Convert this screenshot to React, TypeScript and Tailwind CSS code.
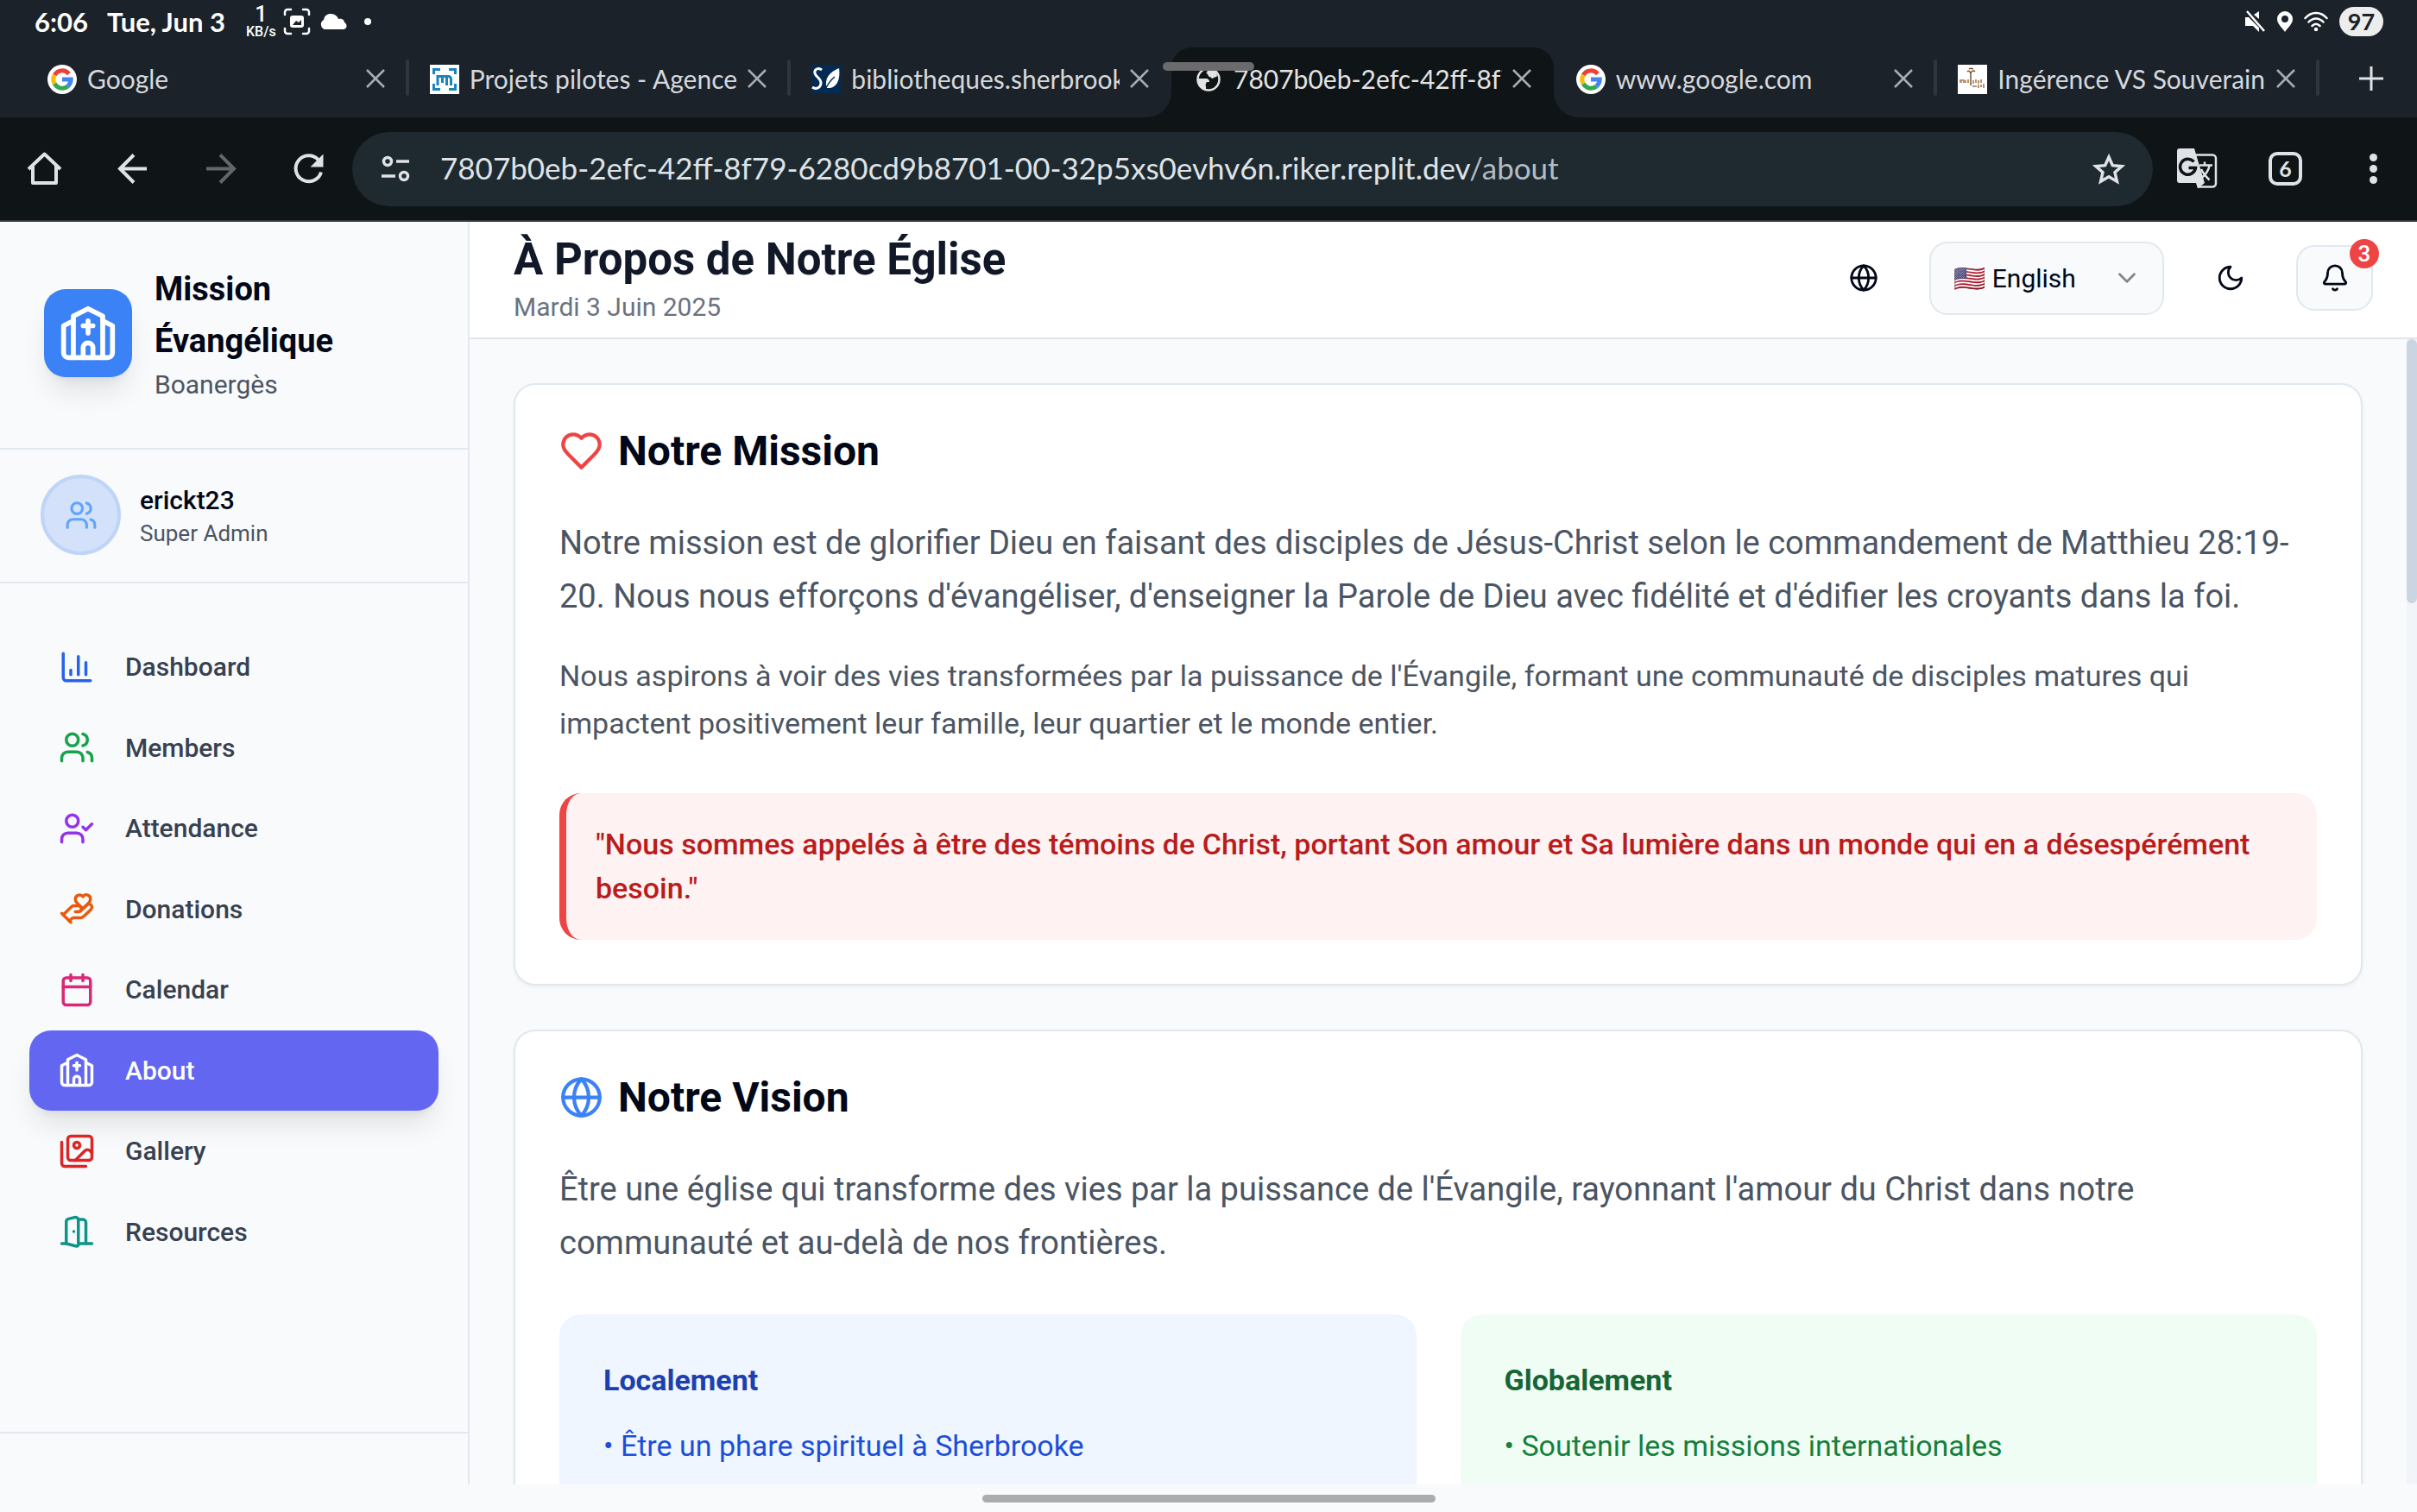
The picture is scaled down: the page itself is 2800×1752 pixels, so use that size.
import React from "react";
import type { ReactNode } from "react";

type IconProps = { className?: string; children?: ReactNode };

function Stroke({ className = "", children }: IconProps) {
  return (
    <svg
      viewBox="0 0 24 24"
      fill="none"
      stroke="currentColor"
      strokeWidth="2"
      strokeLinecap="round"
      strokeLinejoin="round"
      aria-hidden="true"
      className={`shrink-0 ${className}`}
    >
      {children}
    </svg>
  );
}

const Church = ({ className }: IconProps) => (
  <Stroke className={className}>
    <path d="m18 7 4 2v11a2 2 0 0 1-2 2H4a2 2 0 0 1-2-2V9l4-2" />
    <path d="M14 22v-4a2 2 0 0 0-2-2a2 2 0 0 0-2 2v4" />
    <path d="M18 22V5l-6-3-6 3v17" />
    <path d="M12 7v5" />
    <path d="M10 9h4" />
  </Stroke>
);

const Users = ({ className }: IconProps) => (
  <Stroke className={className}>
    <path d="M16 21v-2a4 4 0 0 0-4-4H6a4 4 0 0 0-4 4v2" />
    <circle cx="9" cy="7" r="4" />
    <path d="M22 21v-2a4 4 0 0 0-3-3.87" />
    <path d="M16 3.13a4 4 0 0 1 0 7.75" />
  </Stroke>
);

const Chart = ({ className }: IconProps) => (
  <Stroke className={className}>
    <path d="M3 3v16a2 2 0 0 0 2 2h16" />
    <path d="M18 17V9" />
    <path d="M13 17V5" />
    <path d="M8 17v-3" />
  </Stroke>
);

const UserCheck = ({ className }: IconProps) => (
  <Stroke className={className}>
    <path d="M16 21v-2a4 4 0 0 0-4-4H6a4 4 0 0 0-4 4v2" />
    <circle cx="9" cy="7" r="4" />
    <path d="m16 11 2 2 4-4" />
  </Stroke>
);

const HandHeart = ({ className }: IconProps) => (
  <Stroke className={className}>
    <path d="M11 14h2a2 2 0 1 0 0-4h-3c-.6 0-1.1.2-1.4.6L3 16" />
    <path d="m7 20 1.6-1.4c.3-.4.8-.6 1.4-.6h4c1.1 0 2.1-.4 2.8-1.2l4.6-4.4a2 2 0 0 0-2.75-2.91l-4.2 3.9" />
    <path d="m2 15 6 6" />
    <path d="M19.5 8.5c.7-.7 1.5-1.6 1.5-2.7A2.73 2.73 0 0 0 16 4a2.78 2.78 0 0 0-5 1.8c0 1.2.8 2 1.5 2.8L16 12Z" />
  </Stroke>
);

const Calendar = ({ className }: IconProps) => (
  <Stroke className={className}>
    <path d="M8 2v4" />
    <path d="M16 2v4" />
    <rect width="18" height="18" x="3" y="4" rx="2" />
    <path d="M3 10h18" />
  </Stroke>
);

const Images = ({ className }: IconProps) => (
  <Stroke className={className}>
    <path d="M18 22H4a2 2 0 0 1-2-2V6" />
    <path d="m22 13-1.296-1.296a2.41 2.41 0 0 0-3.408 0L11 18" />
    <circle cx="12" cy="8" r="2" />
    <rect width="16" height="16" x="6" y="2" rx="2" />
  </Stroke>
);

const DoorOpen = ({ className }: IconProps) => (
  <Stroke className={className}>
    <path d="M13 4h3a2 2 0 0 1 2 2v14" />
    <path d="M2 20h3" />
    <path d="M13 20h9" />
    <path d="M10 12v.01" />
    <path d="M13 4.562v16.157a1 1 0 0 1-1.242.97L5 20V5.562a2 2 0 0 1 1.515-1.94l4-1A2 2 0 0 1 13 4.561Z" />
  </Stroke>
);

const Globe = ({ className }: IconProps) => (
  <Stroke className={className}>
    <circle cx="12" cy="12" r="10" />
    <path d="M12 2a14.5 14.5 0 0 0 0 20 14.5 14.5 0 0 0 0-20" />
    <path d="M2 12h20" />
  </Stroke>
);

const Heart = ({ className }: IconProps) => (
  <Stroke className={className}>
    <path d="M19 14c1.49-1.46 3-3.21 3-5.5A5.5 5.5 0 0 0 16.5 3c-1.76 0-3 .5-4.5 2-1.5-1.5-2.74-2-4.5-2A5.5 5.5 0 0 0 2 8.5c0 2.3 1.5 4.05 3 5.5l7 7Z" />
  </Stroke>
);

const Moon = ({ className }: IconProps) => (
  <Stroke className={className}>
    <path d="M12 3a6 6 0 0 0 9 9 9 9 0 1 1-9-9Z" />
  </Stroke>
);

const Bell = ({ className }: IconProps) => (
  <Stroke className={className}>
    <path d="M10.268 21a2 2 0 0 0 3.464 0" />
    <path d="M3.262 15.326A1 1 0 0 0 4 17h16a1 1 0 0 0 .74-1.673C19.41 13.956 18 12.499 18 8A6 6 0 0 0 6 8c0 4.499-1.411 5.956-2.738 7.326" />
  </Stroke>
);

const ChevronDown = ({ className }: IconProps) => (
  <Stroke className={className}>
    <path d="m6 9 6 6 6-6" />
  </Stroke>
);

function GoogleIcon() {
  return (
    <svg viewBox="0 0 34 34" className="size-[34px]" aria-hidden="true">
      <circle cx="17" cy="17" r="17" fill="#fff" />
      <g fill="none" strokeWidth="5">
        <path d="M24.9 10.6A10.2 10.2 0 0 0 8.2 11.9" stroke="#ea4335" />
        <path d="M8.2 11.9a10.2 10.2 0 0 0 0 10.2" stroke="#fbbc05" />
        <path d="M8.2 22.1a10.2 10.2 0 0 0 15.3 2.9" stroke="#34a853" />
        <path d="M23.5 25A10.2 10.2 0 0 0 27.2 17.1H17" stroke="#4285f4" />
      </g>
    </svg>
  );
}

function AgencyIcon() {
  return (
    <svg viewBox="0 0 34 34" className="size-[34px]" aria-hidden="true">
      <path d="M0 0h34v34H0z" fill="#fff" />
      <g fill="none" stroke="#1c84bd" strokeWidth="3">
        <path d="M4.500 11V5.500H12M22 5.500h7.500V11M4.500 22v6.500H12M22 28.500h7.500V22" />
        <path d="M9 24V12M9 13.500h12.500a3 3 0 0 1 3 3V24M14.500 14v7M19.500 14v10" />
      </g>
    </svg>
  );
}

function LibraryIcon() {
  return (
    <svg viewBox="0 0 34 34" className="size-[34px]" aria-hidden="true">
      <path d="M0 0h34v34H0z" fill="#032a52" />
      <path
        d="M12 6C8 3 3 5 4 10c1 4 7 6 7 11 0 6-6 8-10 5"
        fill="none"
        stroke="#fff"
        strokeWidth="3"
      />
      <path d="M32 4c-9 4-16 9-15 20l1 3c10 1 16-8 14-23Z" fill="#fff" />
      <path d="M16 29c3-7 6-11 11-15" fill="none" stroke="#032a52" strokeWidth="1.500" />
    </svg>
  );
}

function EarthIcon() {
  return (
    <svg viewBox="0 0 28 28" className="m-[3px] size-7" aria-hidden="true">
      <circle cx="14" cy="14" r="12.500" fill="none" stroke="#e3e3e3" strokeWidth="2.500" />
      <path
        d="M13 2c-1 3 0 4-2 5 3 0 2 3 4 4 2 0 2 2 4 2 1-2 4-1 5-3 0-4-4-8-11-8ZM2 13h9c3 0 4 2 4 4h-3c-1 2-2 3-1 5v4C5 25 1 20 2 13Z"
        fill="#e3e3e3"
      />
    </svg>
  );
}

function TreeIcon() {
  return (
    <svg viewBox="0 0 34 34" className="size-[34px]" aria-hidden="true">
      <path d="M0 0h34v34H0z" fill="#fff" />
      <g fill="none" stroke="#7a5230" strokeWidth="1.500">
        <path d="M15 10v14M11 8c2-2 3 0 4 2 1-3 3-4 5-2M13 5c1-1 3-1 5 0" />
        <path
          d="M2 18h4M2 20h3M7 17v4M9 18v3M12 17v4M18 18v4M21 17v4M24 18v4M27 17v4M17 25h5M24 23v4M27 23v3M30 22v5"
          stroke="#a0714a"
        />
      </g>
    </svg>
  );
}

type Tab = { label: string; icon: ReactNode; active?: boolean; divider?: boolean };

const tabs: Tab[] = [
  { label: "Google", icon: <GoogleIcon />, divider: true },
  { label: "Projets pilotes - Agence", icon: <AgencyIcon />, divider: true },
  { label: "bibliotheques.sherbrooke", icon: <LibraryIcon /> },
  { label: "7807b0eb-2efc-42ff-8f79", icon: <EarthIcon />, active: true },
  { label: "www.google.com", icon: <GoogleIcon />, divider: true },
  { label: "Ingérence VS Souveraine", icon: <TreeIcon />, divider: true },
];

function StatusBar() {
  return (
    <div className="flex h-[55px] items-start justify-between pr-[39px] pl-10 text-white">
      <div className="flex h-[50px] items-center text-[31px] font-bold">
        <span>6:06</span>
        <span className="ml-[22px]">Tue, Jun 3</span>
        <span className="ml-6 flex flex-col items-center font-[Roboto] leading-none font-medium">
          <span className="text-[25px] leading-6">1</span>
          <span className="text-[16px] leading-4">KB/s</span>
        </span>
        <svg viewBox="0 0 32 32" className="ml-2 size-8" aria-hidden="true">
          <path
            d="M2 8V5a3 3 0 0 1 3-3h4M23 2h4a3 3 0 0 1 3 3v3M30 24v3a3 3 0 0 1-3 3h-4M9 30H5a3 3 0 0 1-3-3v-3"
            fill="none"
            stroke="#fff"
            strokeWidth="2.500"
            strokeLinecap="round"
          />
          <rect x="8" y="9" width="16" height="14" rx="3" fill="#fff" />
          <path d="m11 20 4-5 3 2 3-3v6Z" fill="#1b2229" />
        </svg>
        <svg viewBox="0 0 32 20" className="ml-[10px] h-5 w-8" aria-hidden="true">
          <path
            d="M6 19a6 6 0 0 1-1-11C6 3 9 1 13 1c5 0 8 3 9 6 5-1 7 2 7 4 4 2 3 8-1 8Z"
            fill="#fff"
          />
        </svg>
        <span className="ml-5 size-2 rounded-full bg-white" />
      </div>
      <div className="flex h-[50px] items-center">
        <svg viewBox="0 0 24 26" className="h-[26px] w-6" aria-hidden="true">
          <path d="M17 1v9l-6-5ZM1 8h4l12 12v5l-7-7H1Z" fill="#fff" />
          <path d="m3 1 20 23" stroke="#fff" strokeWidth="2.500" />
        </svg>
        <svg viewBox="0 0 20 26" className="ml-[13px] h-[26px] w-5" aria-hidden="true">
          <path
            d="M10 1a9 9 0 0 0-9 9c0 6 6 10 9 15 3-5 9-9 9-15a9 9 0 0 0-9-9Zm0 5a4 4 0 1 1 0 8 4 4 0 0 1 0-8Z"
            fill="#fff"
          />
        </svg>
        <svg
          viewBox="0 0 28 24"
          className="ml-3 h-6 w-7"
          fill="none"
          stroke="#fff"
          strokeWidth="2.500"
          strokeLinecap="round"
          aria-hidden="true"
        >
          <path d="M1.500 8c7-8 18-8 25 0M5.500 12.500c5-5.500 12-5.500 17 0M9.500 17c3-3 6-3 9 0" />
          <circle cx="14" cy="21" r="1" fill="#fff" />
        </svg>
        <span className="ml-[13px] flex h-[34px] w-[51px] items-center justify-center rounded-full bg-[#ededed] text-[27px] font-bold text-[#1b2229]">
          97
        </span>
      </div>
    </div>
  );
}

function TabStrip() {
  return (
    <div className="relative flex h-[81px] pr-[31px] pl-[29px]">
      {tabs.map((tab) => (
        <div
          key={tab.label}
          className={`relative flex min-w-0 flex-1 pt-5 pr-[26px] pl-[26px] ${
            tab.active ? "rounded-t-3xl bg-[#0f1417] text-[#e3e3e3]" : "text-[#d5d8dc]"
          }`}
        >
          {tab.active && (
            <>
              <span className="absolute bottom-0 -left-7 size-7 bg-[radial-gradient(circle_at_0_0,#1b2229_27px,#0f1417_28px)]" />
              <span className="absolute -right-7 bottom-0 size-7 bg-[radial-gradient(circle_at_100%_0,#1b2229_27px,#0f1417_28px)]" />
            </>
          )}
          <button type="button" className="flex h-[34px] min-w-0 flex-1 items-center text-left text-[30px]">
            <span className="shrink-0">{tab.icon}</span>
            <span className="ml-3 min-w-0 flex-1 overflow-hidden pb-0.5 whitespace-nowrap">{tab.label}</span>
          </button>
          <button
            type="button"
            aria-label={`Close ${tab.label}`}
            className="ml-3 flex size-[22px] items-center justify-center pt-[10px] text-[#a9acb0]"
          >
            <svg viewBox="0 0 22 22" className="size-[22px] shrink-0" stroke="currentColor" strokeWidth="2.500" aria-hidden="true">
              <path d="m1 1 20 20M21 1 1 21" />
            </svg>
          </button>
          {tab.divider && <span className="absolute top-3.5 -right-0.5 h-[42px] w-1 rounded-full bg-[#30363b]" />}
        </div>
      ))}
      <button type="button" aria-label="New tab" className="ml-10 flex h-[72px] w-11 items-center justify-center">
        <svg viewBox="0 0 28 28" className="size-7" stroke="#dfe2e6" strokeWidth="3" aria-hidden="true">
          <path d="M14 0v28M0 14h28" />
        </svg>
      </button>
    </div>
  );
}

function Toolbar() {
  return (
    <div className="flex h-[121px] items-center border-b-2 border-[#33373a] bg-[#0f1417] pr-6 pl-[26px] text-[#dfe2e6]">
      <div className="flex items-center gap-[51px]">
        <button type="button" aria-label="Home">
          <svg viewBox="0 0 51 51" className="size-[51px]" fill="none" stroke="currentColor" strokeWidth="4" aria-hidden="true">
            <path d="M7 26 25.500 8.500 44 26M12 22v20h27V22" strokeLinejoin="round" />
          </svg>
        </button>
        <button type="button" aria-label="Back">
          <svg viewBox="0 0 51 51" className="size-[51px]" fill="none" stroke="currentColor" strokeWidth="4" aria-hidden="true">
            <path d="M42 25.500H11M27 9.500l-16 16 16 16" />
          </svg>
        </button>
        <button type="button" aria-label="Forward" className="text-[#63676a]">
          <svg viewBox="0 0 51 51" className="size-[51px]" fill="none" stroke="currentColor" strokeWidth="4" aria-hidden="true">
            <path d="M9 25.500h32M25 9.500l16 16-16 16" />
          </svg>
        </button>
        <button type="button" aria-label="Reload">
          <svg viewBox="0 0 51 51" className="size-[51px]" fill="none" stroke="currentColor" strokeWidth="4" aria-hidden="true">
            <path d="M40 29.500A15 15 0 1 1 37 15.500" />
            <path d="M42.500 8.500v15h-15Z" fill="currentColor" stroke="none" />
          </svg>
        </button>
      </div>
      <div className="ml-[25px] flex h-[86px] min-w-0 flex-1 items-center rounded-full bg-[#1e2a30] pr-8 pl-[33px]">
        <button type="button" aria-label="Site information">
          <svg viewBox="0 0 34 34" className="size-[34px]" fill="none" stroke="currentColor" strokeWidth="3.500" aria-hidden="true">
            <circle cx="8" cy="8" r="4.500" />
            <path d="M18 8h15M1 25h16" />
            <circle cx="27" cy="25" r="4.500" />
          </svg>
        </button>
        <button type="button" className="ml-[35px] min-w-0 flex-1 truncate pb-0.5 text-left text-[35px]">
          7807b0eb-2efc-42ff-8f79-6280cd9b8701-00-32p5xs0evhv6n.riker.replit.dev<span className="text-[#b4bcc2]">/about</span>
        </button>
        <button type="button" aria-label="Bookmark">
          <svg viewBox="0 0 38 38" className="size-[38px]" fill="none" stroke="currentColor" strokeWidth="3.500" aria-hidden="true">
            <path d="m19 5 4.300 9.700 10.700 1-8 7 2.400 10.500L19 27.700l-9.400 5.500 2.400-10.500-8-7 10.700-1Z" />
          </svg>
        </button>
      </div>
      <button type="button" aria-label="Translate" className="ml-7">
        <svg viewBox="0 0 47 47" className="size-[47px]" aria-hidden="true">
          <path d="M21 7.500h20a4 4 0 0 1 4 4v29a4 4 0 0 1-4 4H24" fill="none" stroke="currentColor" strokeWidth="2.500" />
          <path d="M3 0h17l12 40-8 6.500-2-6.500H3a3 3 0 0 1-3-3V3a3 3 0 0 1 3-3Z" fill="currentColor" />
          <path d="M19.500 15.500a9 9 0 1 0 2 7h-8" fill="none" stroke="#0f1417" strokeWidth="3.500" />
          <path d="M26 19.500h15M32 15.500v4M37.500 20c-1 6-4 10-9 14M28 24c2 5 6 9 9.500 12.500" fill="none" stroke="currentColor" strokeWidth="2.500" />
        </svg>
      </button>
      <button
        type="button"
        aria-label="6 open tabs"
        className="ml-[59px] flex size-[39px] items-center justify-center rounded-[10px] border-4 border-current text-[25px] leading-none font-bold"
      >
        6
      </button>
      <button type="button" aria-label="More options" className="ml-[77px] flex w-[10px] flex-col items-center gap-1">
        <span className="size-[9px] rounded-full bg-current" />
        <span className="size-[9px] rounded-full bg-current" />
        <span className="size-[9px] rounded-full bg-current" />
      </button>
      <span className="w-[22px]" />
    </div>
  );
}

const navItems = [
  { label: "Dashboard", Icon: Chart, color: "text-[#2563eb]" },
  { label: "Members", Icon: Users, color: "text-[#16a34a]" },
  { label: "Attendance", Icon: UserCheck, color: "text-[#9333ea]" },
  { label: "Donations", Icon: HandHeart, color: "text-[#ea580c]" },
  { label: "Calendar", Icon: Calendar, color: "text-[#db2777]" },
  { label: "About", Icon: Church, color: "text-white", active: true },
  { label: "Gallery", Icon: Images, color: "text-[#dc2626]" },
  { label: "Resources", Icon: DoorOpen, color: "text-[#0d9488]" },
];

function Sidebar() {
  return (
    <aside className="flex w-[544px] shrink-0 flex-col border-r-2 border-[#e2e8f0] bg-[#f9fafc]">
      <div className="flex items-center gap-[26px] border-b-2 border-[#e2e8f0] px-[51px] pt-12 pb-[52px]">
        <div className="flex size-[102px] shrink-0 items-center justify-center rounded-[25px] bg-[#3b82f6] text-white shadow-[0_21px_32px_-6px_rgba(0,0,0,0.1),0_8px_12px_-8px_rgba(0,0,0,0.1)]">
          <Church className="size-[68px]" />
        </div>
        <div className="min-w-0">
          <h1 className="text-[38px] leading-[60px] font-bold text-[#020817]">Mission Évangélique</h1>
          <p className="text-[30px] leading-[42px] text-[#4b5563]">Boanergès</p>
        </div>
      </div>
      <div className="flex items-center gap-[22px] border-b-2 border-[#e2e8f0] px-[47px] pt-[29px] pb-[31px]">
        <div className="flex size-[93px] shrink-0 items-center justify-center rounded-full border-4 border-[#bfd5f8] bg-[#d3e1fb] text-[#60a5fa]">
          <Users className="size-[38px]" />
        </div>
        <div>
          <p className="text-[30px] leading-[42px] font-medium text-[#020817]">erickt23</p>
          <p className="text-[26px] leading-[34px] text-[#4b5563]">Super Admin</p>
        </div>
      </div>
      <nav className="grid h-[850px] auto-rows-fr px-[34px] pt-[50px] pb-[52px]">
        {navItems.map(({ label, Icon, color, active }) => (
          <a
            key={label}
            href={`#${label.toLowerCase()}`}
            className={`flex items-center gap-[35px] rounded-[25px] px-[34px] text-[30px] font-medium ${
              active
                ? "bg-[#6366f1] text-white shadow-[0_21px_32px_-6px_rgba(0,0,0,0.1),0_8px_12px_-8px_rgba(0,0,0,0.1)]"
                : "text-[#374151]"
            }`}
          >
            <Icon className={`size-[42px] ${color}`} />
            {label}
          </a>
        ))}
      </nav>
      <div className="mt-auto h-[61px] shrink-0 border-t-2 border-[#e2e8f0]" />
    </aside>
  );
}

function PageHeader() {
  return (
    <header className="flex h-[136px] shrink-0 items-center border-b-2 border-[#e2e4e8] bg-white pr-[51px] pb-1 pl-[51px]">
      <div className="min-w-0 flex-1">
        <h2 className="text-[51px] leading-[68px] font-bold text-[#111827]">À Propos de Notre Église</h2>
        <p className="text-[30px] leading-[42px] text-[#6b7280]">Mardi 3 Juin 2025</p>
      </div>
      <button type="button" aria-label="Change region" className="flex h-[76px] w-[102px] items-center justify-center text-[#020817]">
        <Globe className="size-[34px]" />
      </button>
      <div className="relative ml-[25px]">
        <select
          aria-label="Language"
          className="h-[85px] w-[272px] appearance-none rounded-[21px] border-2 border-[#e2e8f0] bg-[#f8fafc] pr-16 pl-[26px] text-[30px] text-[#020817]"
        >
          <option>🇺🇸 English</option>
        </select>
        <ChevronDown className="pointer-events-none absolute inset-y-0 right-[26px] my-auto size-[34px] text-[#84868c]" />
      </div>
      <button type="button" aria-label="Dark mode" className="ml-[34px] flex h-[76px] w-[85px] items-center justify-center text-[#020817]">
        <Moon className="size-[34px]" />
      </button>
      <button
        type="button"
        aria-label="Notifications"
        className="relative ml-[34px] flex h-[76px] w-[89px] items-center justify-center rounded-[21px] border-2 border-[#e2e8f0] bg-[#f8fafc] text-[#020817]"
      >
        <Bell className="size-[34px]" />
        <span className="absolute -top-[9px] -right-[9px] flex size-[34px] items-center justify-center rounded-full bg-[#ef4444] text-[26px] leading-none font-medium text-white">
          3
        </span>
      </button>
    </header>
  );
}

function Card({ title, icon, children }: { title: string; icon: ReactNode; children: ReactNode }) {
  return (
    <section className="shrink-0 rounded-[25px] border-2 border-[#e2e8f0] bg-white p-[51px] shadow-[0_2px_4px_0_rgba(0,0,0,0.05)]">
      <h3 className="flex items-center gap-[17px] text-[48px] leading-[51px] font-bold text-[#020817]">
        {icon}
        {title}
      </h3>
      <div className="pt-[50px]">{children}</div>
    </section>
  );
}

function Main() {
  return (
    <main className="flex min-h-0 flex-1 bg-[#f9fafc]">
      <div className="flex min-w-0 flex-1 flex-col gap-[51px] overflow-hidden p-[51px] text-[#4b5563]">
        <Card title="Notre Mission" icon={<Heart className="size-[51px] text-[#ef4444]" />}>
          <p className="text-[38px] leading-[62px]">
            Notre mission est de glorifier Dieu en faisant des disciples de Jésus-Christ selon le commandement de Matthieu
            28:19-20. Nous nous efforçons d'évangéliser, d'enseigner la Parole de Dieu avec fidélité et d'édifier les
            croyants dans la foi.
          </p>
          <p className="mt-[34px] text-[34px] leading-[55px]">
            Nous aspirons à voir des vies transformées par la puissance de l'Évangile, formant une communauté de disciples
            matures qui impactent positivement leur famille, leur quartier et le monde entier.
          </p>
          <blockquote className="mt-[53px] rounded-[25px] border-l-8 border-[#ef4444] bg-[#fef2f2] p-[34px] text-[34px] leading-[51px] font-medium text-[#b91c1c]">
            "Nous sommes appelés à être des témoins de Christ, portant Son amour et Sa lumière dans un monde qui en a
            désespérément besoin."
          </blockquote>
        </Card>
        <Card title="Notre Vision" icon={<Globe className="size-[51px] text-[#3b82f6]" />}>
          <p className="text-[38px] leading-[62px]">
            Être une église qui transforme des vies par la puissance de l'Évangile, rayonnant l'amour du Christ dans notre
            communauté et au-delà de nos frontières.
          </p>
          <div className="mt-[52px] grid grid-cols-2 gap-[51px] text-[34px] leading-[51px]">
            <div className="h-[400px] rounded-[25px] bg-[#eff6ff] p-[51px]">
              <h4 className="font-bold text-[#1e40af]">Localement</h4>
              <ul className="mt-[25px] text-[#1d4ed8]">
                <li>• Être un phare spirituel à Sherbrooke</li>
              </ul>
            </div>
            <div className="h-[400px] rounded-[25px] bg-[#f0fdf4] p-[51px]">
              <h4 className="font-bold text-[#166534]">Globalement</h4>
              <ul className="mt-[25px] text-[#15803d]">
                <li>• Soutenir les missions internationales</li>
              </ul>
            </div>
          </div>
        </Card>
      </div>
      <div className="w-3 shrink-0 bg-[#f1f5f9]">
        <div className="h-[306px] rounded-full bg-[#cbd5e1]" />
      </div>
    </main>
  );
}

export default function App() {
  return (
    <div className="flex h-screen flex-col overflow-hidden bg-[#f9fafc] font-['Roboto','Noto_Color_Emoji',sans-serif]">
      <div className="relative shrink-0 bg-[#1b2229] font-['Lato',sans-serif]">
        <StatusBar />
        <TabStrip />
        <Toolbar />
        <span className="absolute inset-x-0 top-[72px] mx-auto h-[10px] w-[106px] rounded-full bg-[#6b6b6d]" />
      </div>
      <div className="flex min-h-0 flex-1">
        <Sidebar />
        <div className="flex min-w-0 flex-1 flex-col">
          <PageHeader />
          <Main />
        </div>
      </div>
      <div className="flex h-8 shrink-0 items-center justify-center bg-[#f9fafc]">
        <span className="h-[9px] w-[525px] rounded-full bg-[#abadad]" />
      </div>
    </div>
  );
}
